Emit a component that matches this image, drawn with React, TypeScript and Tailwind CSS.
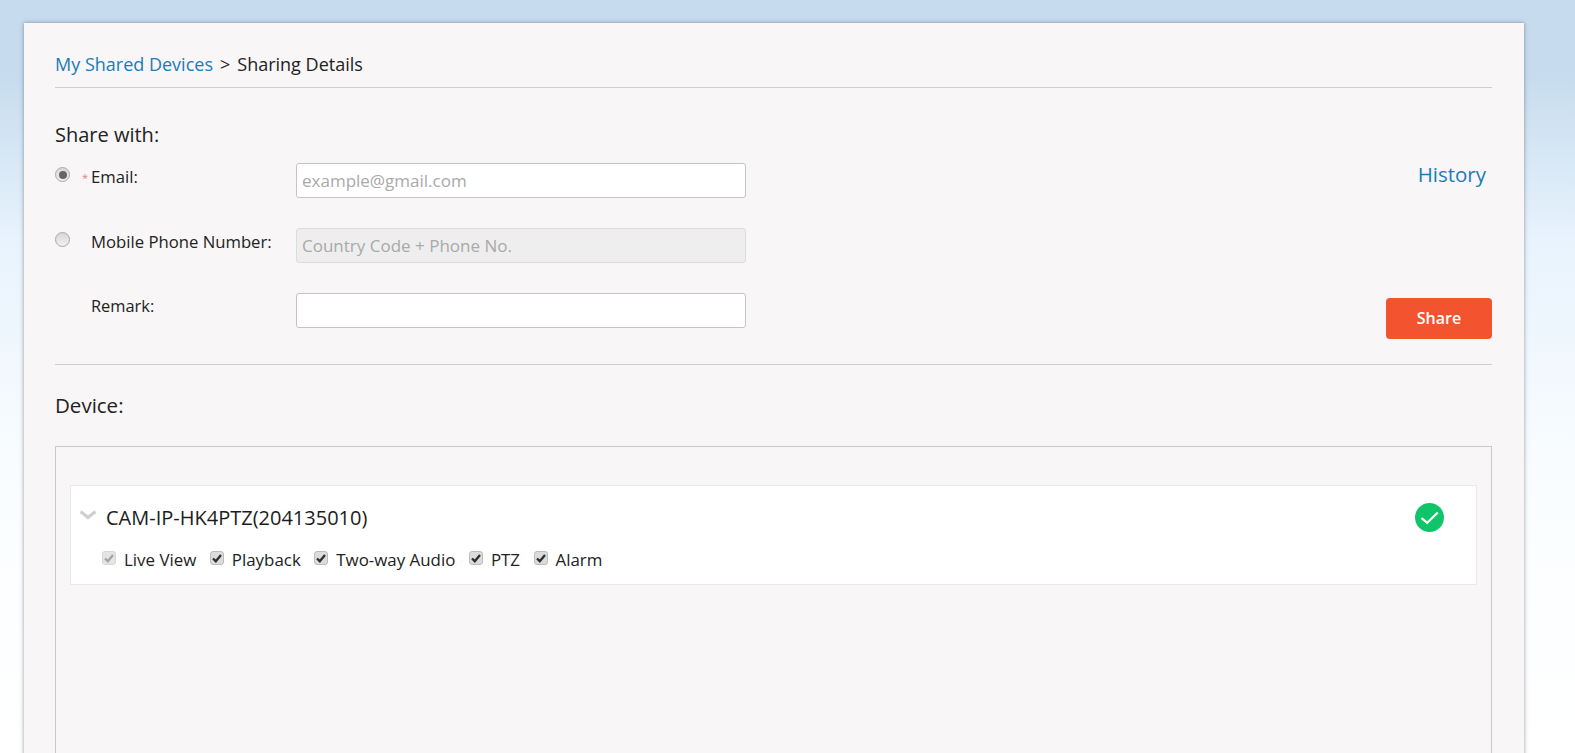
import React from "react";

const font = "font-['Open_Sans','Noto_Sans',sans-serif]";

const perms = [
  { label: "Live View", locked: true },
  { label: "Playback", locked: false },
  { label: "Two-way Audio", locked: false },
  { label: "PTZ", locked: false },
  { label: "Alarm", locked: false },
];

const Radio = ({ on }: { on?: boolean }) => (
  <span className="flex h-[15px] w-[15px] shrink-0 items-center justify-center rounded-full border border-[#a9a9a9] bg-gradient-to-b from-[#d8d8d8] to-[#f0f0f0]">
    {on && <span className="h-[8px] w-[8px] rounded-full bg-[#666]" />}
  </span>
);

const Perm = ({ label, locked }: { label: string; locked: boolean }) => (
  <div className="flex items-center">
    <span
      className={
        "mt-[-5px] flex h-[14px] w-[14px] items-center justify-center rounded-[3px] border " +
        (locked ? "border-[#d8d8d8] bg-[#e4e4e4]" : "border-[#bcbcbc] bg-[#dcdcdc]")
      }
    >
      <svg
        width="12"
        height="12"
        viewBox="0 0 12 12"
        className={locked ? "text-[#a4a4a4]" : "text-[#2e2e2e]"}
      >
        <path d="M2 6.5 L4.8 9.2 L10 3" fill="none" stroke="currentColor" strokeWidth="2.3" />
      </svg>
    </span>
    <span className="ml-[8px] text-[16.9px] leading-[22px] text-[#222]">{label}</span>
  </div>
);

export default function App() {
  return (
    <div
      className={
        font +
        " h-[753px] overflow-hidden bg-[linear-gradient(180deg,#c6dcee_0%,#c6dcee_10%,#e8f3fd_32%,#fafdff_64%,#ffffff_100%)] pl-[24px] pt-[23px]"
      }
    >
      <div className="h-[800px] w-[1500px] bg-[#f8f6f7] pl-[31px] pr-[32px] pt-[28px] shadow-[0_0_4px_rgba(80,85,90,0.6)]">
        {/* breadcrumb */}
        <div className="h-[37px] border-b border-[#cfcfcf] text-[18px] leading-[26px] text-[#222]">
          <span className="text-[#1a7cb8]">My Shared Devices</span>
          <span className="mx-[7px]">&gt;</span>
          <span>Sharing Details</span>
        </div>

        <div className="mt-[33px] text-[20px] leading-[28px] text-[#222]">Share with:</div>

        {/* form + actions */}
        <div className="relative mt-[14px] h-[202px] border-b border-[#cfcfcf]">
          <div className="flex h-[35px] items-start">
            <div className="mt-[4px]">
              <Radio on />
            </div>
            <span className="ml-[12px] mt-[8px] w-[9px] text-[11px] leading-[14px] text-[#e8808a]">*</span>
            <span className="mt-[1px] w-[205px] text-[16.7px] leading-[26px] text-[#222]">Email:</span>
            <input
              className="h-[35px] w-[450px] rounded-[3px] border border-[#c4c4c4] bg-white px-[5px] text-[17px] outline-none placeholder:text-[#a9a9a9]"
              placeholder="example@gmail.com"
            />
          </div>
          <div className="mt-[30px] flex h-[35px] items-start">
            <div className="mt-[4px]">
              <Radio />
            </div>
            <span className="ml-[21px] mt-[1px] w-[205px] text-[16.7px] leading-[26px] text-[#222]">
              Mobile Phone Number:
            </span>
            <input
              disabled
              className="h-[35px] w-[450px] rounded-[3px] border border-[#dcdcdc] bg-[#eeeeee] px-[5px] text-[17px] outline-none placeholder:text-[#a9a9a9]"
              placeholder="Country Code + Phone No."
            />
          </div>
          <div className="mt-[30px] flex h-[35px] items-start">
            <span className="ml-[36px] w-[205px] text-[16.4px] leading-[26px] text-[#222]">Remark:</span>
            <input className="h-[35px] w-[450px] rounded-[3px] border border-[#c4c4c4] bg-white px-[5px] outline-none" />
          </div>

          <a className="absolute right-[6px] top-[-4px] text-[20.5px] leading-[30px] text-[#1a7cb8]">History</a>
          <button className="absolute bottom-[25px] right-0 h-[41px] w-[106px] rounded-[4px] bg-[#f4532f] pb-[2px] text-[16px] font-semibold text-[#fff]">
            Share
          </button>
        </div>

        <div className="mt-[26px] text-[20.5px] leading-[28px] text-[#222]">Device:</div>

        {/* device list */}
        <div className="mt-[27px] h-[400px] border border-[#c9c9c9] px-[14px] pt-[38px]">
          <div className="h-[100px] border border-[#e9e9e9] bg-white">
            <div className="flex h-[63px] items-center pl-[8px] pr-[32px]">
              <svg width="18" height="10" viewBox="0 0 18 10" className="mt-[-5px] text-[#cfcfcf]">
                <path d="M1.5 1.5 L9 7.5 L16.5 1.5" fill="none" stroke="currentColor" strokeWidth="3" />
              </svg>
              <span className="ml-[9px] text-[20px] leading-[26px] text-[#1c1c1c]">CAM-IP-HK4PTZ(204135010)</span>
              <span className="ml-auto flex h-[29px] w-[29px] items-center justify-center rounded-full bg-[#10c469]">
                <svg width="29" height="29" viewBox="0 0 29 29">
                  <path d="M6.5 15.2 L12.2 19.8 L22.8 9.5" fill="none" stroke="#fff" strokeWidth="2.2" />
                </svg>
              </span>
            </div>
            <div className="flex gap-[13.5px] pl-[31px]">
              {perms.map((p) => (
                <Perm key={p.label} label={p.label} locked={p.locked} />
              ))}
            </div>
          </div>
        </div>
      </div>
    </div>
  );
}
